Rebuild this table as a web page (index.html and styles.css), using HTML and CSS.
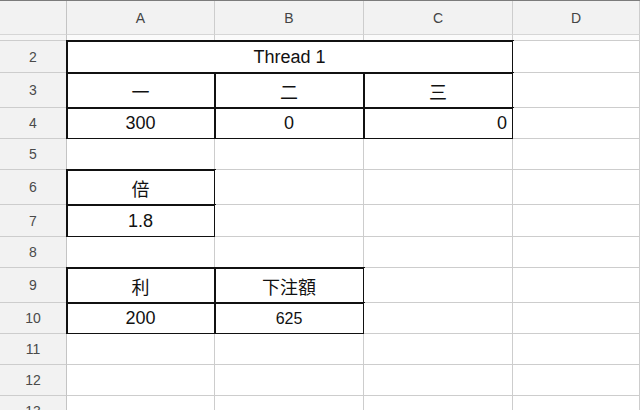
FILE: index.html
```html
<!DOCTYPE html>
<html>
<head>
<meta charset="utf-8">
<link rel="stylesheet" href="styles.css">
</head>
<body>
<div class="sheet">
  <div class="rh corner"></div>
  <div class="ch">A</div>
  <div class="ch">B</div>
  <div class="ch">C</div>
  <div class="ch">D</div>

  <div class="rh r1"></div>
  <div class="c r1"></div><div class="c r1"></div><div class="c r1"></div><div class="c r1"></div>

  <div class="rh r2">2</div>
  <div class="c r2 span3 box">Thread 1</div>
  <div class="c r2"></div>

  <div class="rh r3">3</div>
  <div class="c r3 box cjk">一</div>
  <div class="c r3 box cjk">二</div>
  <div class="c r3 box cjk">三</div>
  <div class="c r3"></div>

  <div class="rh r4">4</div>
  <div class="c r4 box">300</div>
  <div class="c r4 box">0</div>
  <div class="c r4 box right">0</div>
  <div class="c r4"></div>

  <div class="rh r5">5</div>
  <div class="c r5"></div><div class="c r5"></div><div class="c r5"></div><div class="c r5"></div>

  <div class="rh r6">6</div>
  <div class="c r6 box cjk">倍</div>
  <div class="c r6"></div><div class="c r6"></div><div class="c r6"></div>

  <div class="rh r7">7</div>
  <div class="c r7 box">1.8</div>
  <div class="c r7"></div><div class="c r7"></div><div class="c r7"></div>

  <div class="rh r8">8</div>
  <div class="c r8"></div><div class="c r8"></div><div class="c r8"></div><div class="c r8"></div>

  <div class="rh r9">9</div>
  <div class="c r9 box cjk">利</div>
  <div class="c r9 box cjk">下注額</div>
  <div class="c r9"></div><div class="c r9"></div>

  <div class="rh r10">10</div>
  <div class="c r10 box">200</div>
  <div class="c r10 box small">625</div>
  <div class="c r10"></div><div class="c r10"></div>

  <div class="rh">11</div>
  <div class="c"></div><div class="c"></div><div class="c"></div><div class="c"></div>

  <div class="rh">12</div>
  <div class="c"></div><div class="c"></div><div class="c"></div><div class="c"></div>

  <div class="rh">13</div>
  <div class="c"></div><div class="c"></div><div class="c"></div><div class="c"></div>
</div>
</body>
</html>
```

FILE: styles.css
```css
html, body {
  margin: 0;
  padding: 0;
  background: #ffffff;
  overflow: hidden;
}

body {
  width: 640px;
  height: 410px;
  font-family: "Liberation Sans", Arial, "Noto Sans CJK TC", sans-serif;
}

.sheet {
  display: grid;
  grid-template-columns: 67px 148px 149px 149px 1fr;
  grid-template-rows: 34px 6px 32px 35px 31px 31px 35px 32px 31px 35px 31px 31px 31px 31px;
  border-top: 1px solid #7c7c7c;
}

.sheet > div {
  box-sizing: border-box;
  border-right: 1px solid #cdcdcd;
  border-bottom: 1px solid #cdcdcd;
  display: flex;
  align-items: center;
  justify-content: center;
  overflow: visible;
  white-space: nowrap;
}

.corner, .ch {
  background: #f2f2f2;
  font-size: 14px;
  color: #444444;
  border-bottom-color: #d6d6d6 !important;
}

.sheet > .corner {
  border-right-color: #d0d0d0;
}

.ch {
  padding-top: 1px;
}

.rh {
  background: #f2f2f2;
  font-size: 14px;
  color: #4a4a4a;
  border-right-color: #c4c4c4 !important;
}

.sheet > .rh.r1 {
  background: #f5f5f5;
}

.sheet > .c.r1 {
  background: #fbfbfb;
}

.c {
  font-size: 18px;
  color: #111111;
  background: #ffffff;
  padding-top: 1px;
}

.span3 {
  grid-column: span 3;
}

.box {
  outline: 2px solid #111111;
  outline-offset: -1px;
}

.cjk {
  font-family: "Noto Sans CJK TC", "Noto Sans CJK JP", sans-serif;
  font-size: 18px;
}

.sheet > .right {
  justify-content: flex-end;
  padding-right: 5px;
}

.small {
  font-size: 16px;
}
```
